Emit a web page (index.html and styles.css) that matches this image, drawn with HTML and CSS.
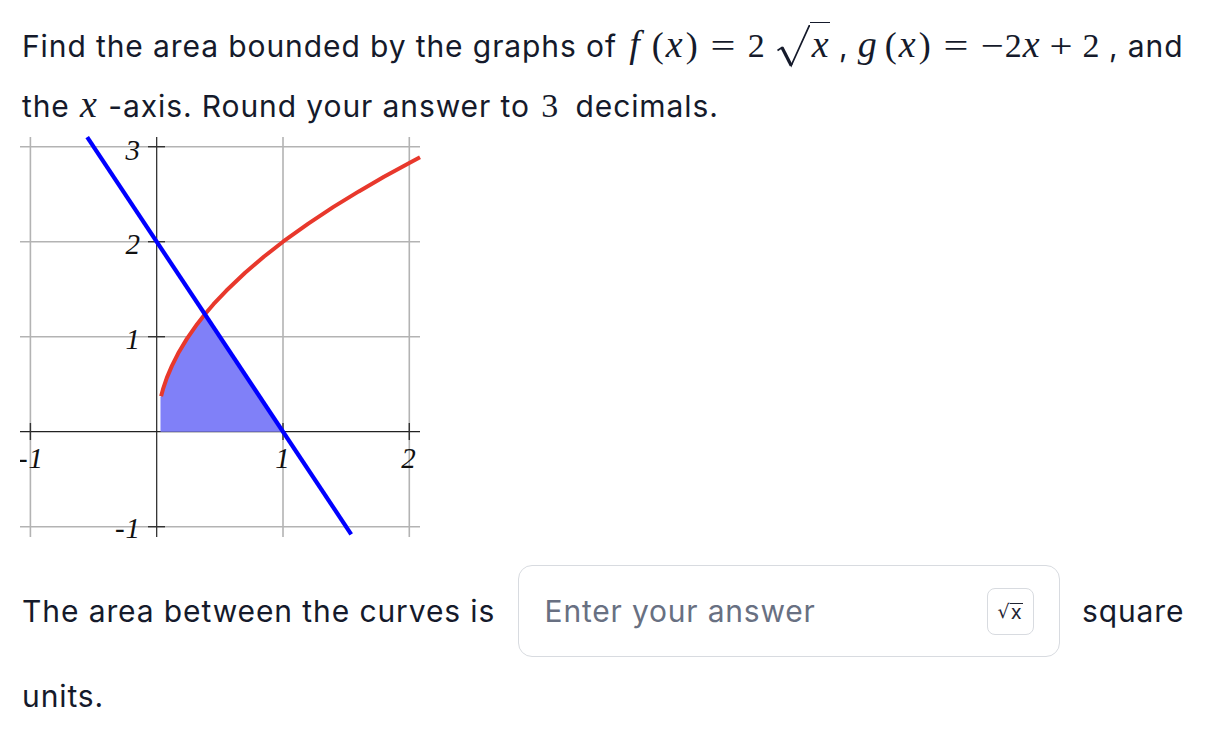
FILE: index.html
```html
<!DOCTYPE html>
<html>
<head>
<meta charset="utf-8">
<link rel="stylesheet" href="styles.css">
</head>
<body>
<div class="page">
  <p class="question">Find the area bounded by the graphs of <span class="m"><i class="mi f">f</i><span class="mo">(</span><i class="mi px">x</i><span class="mo">)</span><span class="rel">=</span><span class="mn two">2</span><span class="sqrt"><svg class="radsign" width="33" height="43" viewBox="0 0 33 43" xmlns="http://www.w3.org/2000/svg"><path d="M0.5,25.5 L5,22.5 L14.2,40.5 L32.2,0.9 L33,0.9" fill="none" stroke="#151a2b" stroke-width="1.7" stroke-linejoin="miter"/><path d="M5,22.5 L14.2,40.5" stroke="#151a2b" stroke-width="3.2"/></svg><span class="rad"><i class="mi">x</i></span></span></span> , <span class="m"><i class="mi g">g</i><span class="mo">(</span><i class="mi px">x</i><span class="mo">)</span><span class="rel">=</span><span class="bin neg">−</span><span class="mn">2</span><i class="mi lx">x</i><span class="bin plus">+</span><span class="mn">2</span></span> , and the <span class="m"><i class="mi lx">x</i></span> -axis. Round your answer to <span class="m"><span class="mn three">3</span></span> decimals.</p>

  <svg class="graph" width="420" height="404" viewBox="0 0 420 404" xmlns="http://www.w3.org/2000/svg">
    <g stroke="#b3b3b3" stroke-width="1.6">
      <line x1="10.4" y1="2" x2="10.4" y2="402"/>
      <line x1="263" y1="2" x2="263" y2="402"/>
      <line x1="389.3" y1="2" x2="389.3" y2="402"/>
      <line x1="0" y1="11.7" x2="400" y2="11.7"/>
      <line x1="0" y1="106.7" x2="400" y2="106.7"/>
      <line x1="0" y1="201.7" x2="400" y2="201.7"/>
      <line x1="0" y1="391.7" x2="400" y2="391.7"/>
    </g>
    <g stroke="#222" stroke-width="1.2">
      <line x1="136.7" y1="2" x2="136.7" y2="402"/>
      <line x1="0" y1="296.7" x2="400" y2="296.7"/>
    </g>
    <g stroke="#333" stroke-width="1.4">
      <line x1="128" y1="11.7" x2="145" y2="11.7"/>
      <line x1="128" y1="106.7" x2="145" y2="106.7"/>
      <line x1="128" y1="201.7" x2="145" y2="201.7"/>
      <line x1="128" y1="391.7" x2="145" y2="391.7"/>
      <line x1="10.4" y1="288" x2="10.4" y2="305"/>
      <line x1="263" y1="288" x2="263" y2="305"/>
      <line x1="389.3" y1="288" x2="389.3" y2="305"/>
    </g>
    <polygon fill="#8080f8" points="140.5,296.7 140.5,262 141.1,261.2 143.0,254.2 146.8,242.9 151.9,230.9 158.2,218.3 167.0,203.6 177.1,189.2 184.9,179.3 263,296.7"/>
    <polyline fill="none" stroke="#e8382c" stroke-width="4" stroke-linejoin="round" points="141.1,261.2 143.0,254.2 146.8,242.9 151.9,230.9 158.2,218.3 167.0,203.6 177.1,189.2 184.9,179.3 193.5,169.2 206.2,155.8 225.1,137.8 244.1,121.5 263.0,106.7 288.3,88.6 313.5,71.9 338.8,56.4 364.0,41.8 389.3,28.0 400.0,22.3"/>
    <line x1="67.2" y1="2.2" x2="331.2" y2="399.3" stroke="#0000ff" stroke-width="4.2"/>
    <g class="lbl">
      <text x="121" y="25" text-anchor="end">3</text>
      <text x="121" y="119" text-anchor="end">2</text>
      <text x="121" y="214" text-anchor="end">1</text>
      <text x="121" y="403" text-anchor="end">-1</text>
      <text x="11" y="333" text-anchor="middle">-1</text>
      <text x="263" y="333" text-anchor="middle">1</text>
      <text x="389" y="333" text-anchor="middle">2</text>
    </g>
  </svg>

  <p class="answer">The area between the curves is <span class="field"><span class="placeholder">Enter your answer</span><span class="mathbtn"><span class="btn-rs">√</span><span class="btn-x">x</span></span></span> square units.</p>
</div>
</body>
</html>
```

FILE: styles.css
```css
html, body {
  margin: 0;
  padding: 0;
  background: #ffffff;
}

.page {
  padding: 16px 0 0 22px;
  font-family: "Inter", "Liberation Sans", sans-serif;
  font-size: 30px;
  letter-spacing: 0.9px;
  color: #151a2b;
}

.question {
  margin: 0;
  line-height: 60px;
}

.m {
  font-family: "Liberation Serif", "DejaVu Serif", serif;
  font-size: 34px;
  line-height: 1;
  letter-spacing: 0;
  white-space: nowrap;
}

.mi {
  font-style: italic;
  font-size: 38px;
  line-height: 1;
}

.f {
  margin-left: 3px;
  margin-right: 12px;
}

.g {
  margin-right: 8px;
}

.px {
  margin: 0 3px 0 2px;
}

.lx {
  margin: 0 2px 0 1px;
}

.mo {
  font-size: 36px;
  line-height: 1;
}

.rel {
  display: inline-block;
  width: 26px;
  margin: 0 12px;
  text-align: center;
  transform: scaleX(1.3);
}

.bin {
  display: inline-block;
  width: 22px;
  text-align: center;
  transform: scaleX(1.2);
}

.neg {
  margin-right: 2px;
}

.plus {
  margin: 0 11px 0 8px;
}

.two {
  margin-right: 12px;
}

.three {
  margin: 0 8px 0 2px;
}

.sqrt {
  display: inline-block;
  white-space: nowrap;
  line-height: 1;
}

.radsign {
  display: inline-block;
  vertical-align: -11px;
}

.rad {
  display: inline-block;
  line-height: 34px;
  padding: 2px 1px 0 2px;
  border-top: 1.7px solid #151a2b;
}

.graph {
  display: block;
  margin: -1px 0 0 -2px;
}

.lbl text {
  font-family: "Liberation Serif", "DejaVu Serif", serif;
  font-style: italic;
  font-size: 29px;
  fill: #111;
}

.answer {
  margin: 26px 0 0 0;
  line-height: 60px;
}

.field {
  display: inline-flex;
  align-items: center;
  justify-content: space-between;
  box-sizing: border-box;
  width: 542px;
  height: 92px;
  margin: 0 13px 9px 13px;
  padding: 0 25px 0 26px;
  border: 1.5px solid #d8dbe0;
  border-radius: 14px;
  vertical-align: baseline;
  letter-spacing: 0.8px;
}

.placeholder {
  color: #687082;
}

.mathbtn {
  display: inline-flex;
  align-items: center;
  justify-content: center;
  box-sizing: border-box;
  width: 47px;
  height: 47px;
  border: 1.5px solid #d8dbe0;
  border-radius: 8px;
  font-size: 20px;
  line-height: 20px;
  letter-spacing: 0;
  color: #1f2433;
}

.btn-rs {
  font-family: "DejaVu Sans", sans-serif;
  font-size: 19px;
}

.btn-x {
  border-top: 1.5px solid #1f2433;
  line-height: 16px;
  padding: 0 1px;
}
```
